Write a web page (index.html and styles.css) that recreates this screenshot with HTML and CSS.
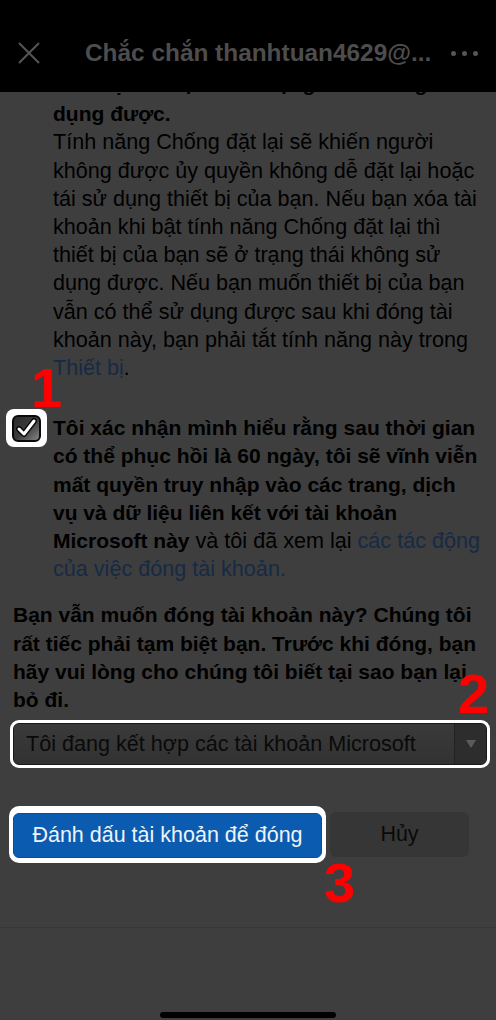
FILE: index.html
```html
<!DOCTYPE html>
<html lang="vi">
  <head>
    <meta charset="UTF-8" />
    <meta name="viewport" content="width=device-width, initial-scale=1.0" />
    <title>Đóng tài khoản</title>
    <link rel="stylesheet" href="styles.css">
  </head>
  <body>
    <div class="screen">
      <header class="topbar">
        <svg class="close-icon" width="22" height="22" viewBox="0 0 22 22">
          <path d="M1 1 L21 21 M21 1 L1 21" stroke="#555" stroke-width="2" fill="none" />
        </svg>
        <div class="title">Chắc chắn thanhtuan4629@...</div>
        <div class="more"><span></span><span></span><span></span></div>
      </header>

      <main class="content">
        <p class="cut"><b>thiết bị của bạn sẽ ở trạng thái không sử</b></p>
        <p class="note">
          <b>dụng được.</b><br />
          Tính năng Chống đặt lại sẽ khiến người<br />
          không được ủy quyền không dễ đặt lại hoặc<br />
          tái sử dụng thiết bị của bạn. Nếu bạn xóa tài<br />
          khoản khi bật tính năng Chống đặt lại thì<br />
          thiết bị của bạn sẽ ở trạng thái không sử<br />
          dụng được. Nếu bạn muốn thiết bị của bạn<br />
          vẫn có thể sử dụng được sau khi đóng tài<br />
          khoản này, bạn phải tắt tính năng này trong<br />
          <a href="#">Thiết bị</a>.
        </p>

        <div class="confirm">
          <div class="check-ring">
            <svg width="29" height="27" viewBox="0 0 29 27">
              <defs>
                <linearGradient id="boxfill" x1="0" y1="0" x2="1" y2="1">
                  <stop offset="0" stop-color="#2a2a2a" />
                  <stop offset="0.5" stop-color="#3c3c3c" />
                  <stop offset="1" stop-color="#8a8a8a" />
                </linearGradient>
              </defs>
              <rect x="1" y="1" width="27" height="25" rx="5" fill="url(#boxfill)" stroke="#0a0a0a" stroke-width="2" />
              <path d="M7 14 L12 19 L22 6" stroke="#0a0a0a" stroke-width="6" fill="none" stroke-linecap="round" stroke-linejoin="round" />
              <path d="M7 14 L12 19 L22 6" stroke="#fff" stroke-width="3" fill="none" stroke-linecap="round" stroke-linejoin="round" />
            </svg>
          </div>
          <p class="confirm-text">
            <b>Tôi xác nhận mình hiểu rằng sau thời gian<br />
            có thể phục hồi là 60 ngày, tôi sẽ vĩnh viễn<br />
            mất quyền truy nhập vào các trang, dịch<br />
            vụ và dữ liệu liên kết với tài khoản<br />
            Microsoft này</b> và tôi đã xem lại <a href="#">các tác động<br />
            của việc đóng tài khoản.</a>
          </p>
        </div>

        <p class="ask">
          Bạn vẫn muốn đóng tài khoản này? Chúng tôi<br />
          rất tiếc phải tạm biệt bạn. Trước khi đóng, bạn<br />
          hãy vui lòng cho chúng tôi biết tại sao bạn lại<br />
          bỏ đi.
        </p>

        <div class="select-ring">
          <div class="select">
            <span class="select-value">Tôi đang kết hợp các tài khoản Microsoft</span>
            <span class="select-arrow"><i></i></span>
          </div>
        </div>

        <div class="actions">
          <div class="mark-ring">
            <button class="btn-mark">Đánh dấu tài khoản để đóng</button>
          </div>
          <button class="btn-cancel">Hủy</button>
        </div>
      </main>

      <footer class="bottom">
        <div class="home-bar"></div>
      </footer>

      <span class="step step-1">1</span>
      <span class="step step-2">2</span>
      <span class="step step-3">3</span>
    </div>
  </body>
</html>
```

FILE: styles.css
```css
* {
  padding: 0;
  margin: 0;
  box-sizing: border-box;
}
body {
  background-color: #3e3e3e;
  font-family: "Liberation Sans", Arial, sans-serif;
  color: #000;
}
a {
  color: #172a44;
  text-decoration: none;
}
b {
  font-size: 21px;
}
.screen {
  position: relative;
  width: 496px;
  height: 1020px;
  overflow: hidden;
  display: flex;
  flex-direction: column;
}

/* top bar */
.topbar {
  height: 92px;
  flex-shrink: 0;
  background-color: #000;
  display: flex;
  align-items: center;
  padding: 14px 18px 0 18px;
}
.close-icon {
  flex-shrink: 0;
}
.title {
  margin-left: 45px;
  font-size: 24.4px;
  font-weight: bold;
  color: #4d4d4d;
  white-space: nowrap;
}
.more {
  margin-left: auto;
  display: flex;
  gap: 6px;
}
.more span {
  width: 5px;
  height: 5px;
  border-radius: 50%;
  background-color: #555;
}

/* content */
.content {
  flex: 1;
  overflow: hidden;
  font-size: 21.6px;
  line-height: 28.2px;
}
.cut {
  padding-left: 53px;
  margin-top: -22.5px;
  white-space: nowrap;
}
.note {
  margin-top: 2.5px;
  padding-left: 53px;
  white-space: nowrap;
}
.confirm {
  display: flex;
  align-items: flex-start;
  margin-top: 32px;
  padding-left: 6px;
}
.check-ring {
  width: 41px;
  height: 38px;
  margin-top: -5px;
  flex-shrink: 0;
  background-color: #fff;
  border-radius: 8px;
  display: flex;
  align-items: center;
  justify-content: center;
}
.check-ring svg {
  display: block;
}
.confirm-text {
  margin-left: 6px;
  white-space: nowrap;
}
.ask {
  margin-top: 18px;
  padding-left: 13px;
  font-size: 21px;
  font-weight: bold;
  white-space: nowrap;
}

/* dropdown */
.select-ring {
  margin: 6px 6px 0 10px;
  padding: 3px;
  background-color: #fff;
  border-radius: 9px;
}
.select {
  height: 42px;
  display: flex;
  align-items: stretch;
  background: linear-gradient(#3a3a3a, #323232);
  border: 1px solid #1a1a1a;
  border-radius: 6px;
  overflow: hidden;
}
.select-value {
  flex: 1;
  display: flex;
  align-items: center;
  padding-left: 12px;
  white-space: nowrap;
  color: #0a0a0a;
}
.select-arrow {
  width: 32px;
  display: flex;
  align-items: center;
  justify-content: center;
  background-color: #2d2d2d;
  border-left: 1px solid #222;
}
.select-arrow i {
  width: 0;
  height: 0;
  border-left: 5px solid transparent;
  border-right: 5px solid transparent;
  border-top: 8px solid #5b5b5b;
}

/* buttons */
.actions {
  margin-top: 38px;
  padding-left: 9px;
  display: flex;
  align-items: center;
}
.mark-ring {
  padding: 7px 4px 5px 4px;
  background-color: #fff;
  border-radius: 10px;
}
button {
  font-family: "Liberation Sans", Arial, sans-serif;
  font-size: 21.5px;
  cursor: pointer;
  border: none;
}
.btn-mark {
  display: block;
  width: 309px;
  height: 45px;
  background-color: #0b5cb0;
  border: 1px solid #0a4e96;
  border-radius: 6px;
  color: #eef3f8;
}
.btn-cancel {
  margin-left: 4px;
  width: 139px;
  height: 45px;
  background-color: #363636;
  border-radius: 6px;
  color: #0a0a0a;
}

/* bottom */
.bottom {
  height: 93px;
  flex-shrink: 0;
  border-top: 1px solid #373737;
  display: flex;
  align-items: flex-end;
  justify-content: center;
  padding-bottom: 2px;
}
.home-bar {
  width: 176px;
  height: 6px;
  border-radius: 3px;
  background-color: #000;
}

/* red step numbers drawn over the page */
.step {
  position: absolute;
  font-size: 56px;
  line-height: 1;
  font-weight: bold;
  color: #f00;
}
.step-1 {
  left: 31px;
  top: 360px;
}
.step-2 {
  left: 458px;
  top: 666px;
}
.step-3 {
  left: 324px;
  top: 855px;
}
```
